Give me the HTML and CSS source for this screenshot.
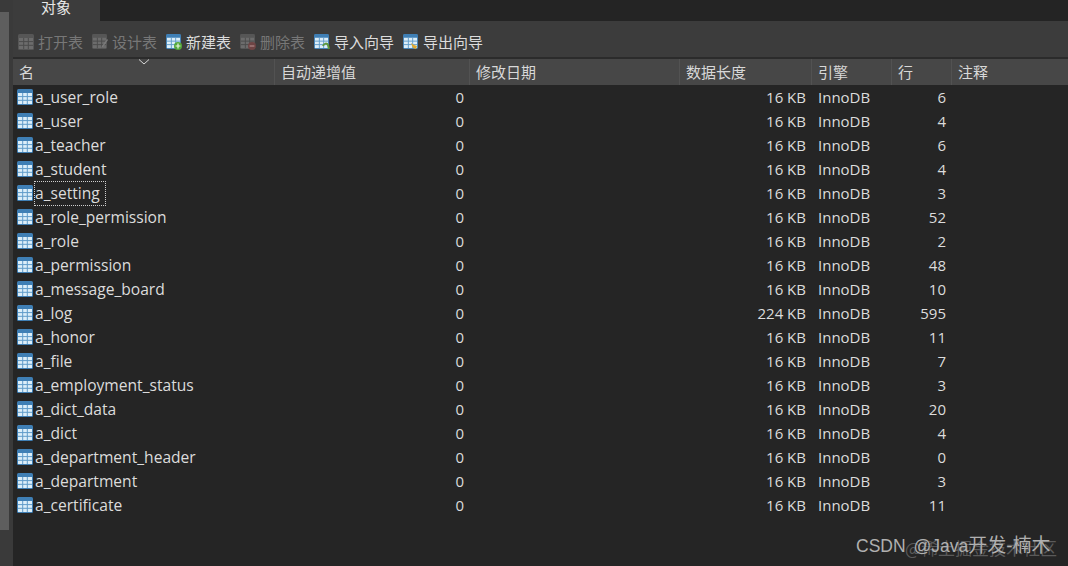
FILE: index.html
```html
<!DOCTYPE html>
<html lang="zh">
<head>
<meta charset="utf-8">
<title>对象</title>
<link rel="stylesheet" href="styles.css">
</head>
<body>
<svg class="defs" width="0" height="0" aria-hidden="true">
  <defs>
    <symbol id="tbl" viewBox="0 0 16 16">
      <rect x="0" y="0" width="16" height="16" rx="1.5" fill="#3f7fb5"/>
      <rect x="1" y="4" width="14" height="11" fill="#dceef9"/>
      <path d="M5.7 4v11M10.3 4v11M1 7.6h14M1 11.3h14" stroke="#5f9bc9" stroke-width="1" fill="none"/>
    </symbol>
    <symbol id="tblgrey" viewBox="0 0 16 16">
      <rect width="16" height="16" rx="1.5" fill="#565656"/>
      <rect x="1" y="4" width="14" height="11" fill="#6c6c6c"/>
      <path d="M5.7 4v11M10.3 4v11M1 7.6h14M1 11.3h14" stroke="#4c4c4c" stroke-width="1" fill="none"/>
    </symbol>
  </defs>
</svg>
<div class="app">
  <div class="side"><div class="side-top"></div><div class="side-mid"></div><div class="side-low"></div></div>
  <div class="main">
    <div class="tabs"><div class="tab">对象</div></div>
    <div class="toolbar">
      <span class="tool off w-open"><svg class="ticon"><use href="#tblgrey"/></svg>打开表</span>
      <span class="tool off w-design"><svg class="ticon" viewBox="0 0 16 16"><use href="#tblgrey" width="15" height="15"/><path d="M10 12l5-7 1 1-5 7-2 1z" fill="#7a7a7a"/></svg>设计表</span>
      <span class="tool w-new"><svg class="ticon" viewBox="0 0 16 16"><use href="#tbl" width="15" height="15"/><circle cx="12" cy="12" r="4" fill="#54a83a"/><path d="M12 9.6v4.8M9.6 12h4.8" stroke="#e8f6e0" stroke-width="1.2"/></svg>新建表</span>
      <span class="tool off w-del"><svg class="ticon" viewBox="0 0 16 16"><use href="#tblgrey" width="15" height="15"/><circle cx="12" cy="12" r="4" fill="#6e4444"/><path d="M9.6 12h4.8" stroke="#b08a8a" stroke-width="1.2"/></svg>删除表</span>
      <span class="tool w-imp"><svg class="ticon" viewBox="0 0 16 16"><use href="#tbl" width="15" height="15"/><path d="M9 12c1-3 4-3 5-1l1 4" stroke="#5f9a3c" stroke-width="2" fill="none"/></svg>导入向导</span>
      <span class="tool w-exp"><svg class="ticon" viewBox="0 0 16 16"><use href="#tbl" width="15" height="15"/><path d="M8 9l3 2 3 1-1 3-3-1z" fill="#e0a92e"/></svg>导出向导</span>
    </div>
    <div class="sep"></div>
    <div class="head row-grid">
      <div class="hcell">名<svg class="sort" width="12" height="6" viewBox="0 0 12 6"><path d="M1 .5l5 4.5 5-4.5" stroke="#d8d8d8" fill="none"/></svg></div>
      <div class="hcell">自动递增值</div>
      <div class="hcell">修改日期</div>
      <div class="hcell">数据长度</div>
      <div class="hcell">引擎</div>
      <div class="hcell">行</div>
      <div class="hcell last">注释</div>
    </div>
    <div class="rows">
      <div class="row row-grid"><div class="name"><svg class="ricon"><use href="#tbl"/></svg><span>a_user_role</span></div><div class="num">0</div><div></div><div class="num">16 KB</div><div class="eng">InnoDB</div><div class="num">6</div><div></div></div>
      <div class="row row-grid"><div class="name"><svg class="ricon"><use href="#tbl"/></svg><span>a_user</span></div><div class="num">0</div><div></div><div class="num">16 KB</div><div class="eng">InnoDB</div><div class="num">4</div><div></div></div>
      <div class="row row-grid"><div class="name"><svg class="ricon"><use href="#tbl"/></svg><span>a_teacher</span></div><div class="num">0</div><div></div><div class="num">16 KB</div><div class="eng">InnoDB</div><div class="num">6</div><div></div></div>
      <div class="row row-grid"><div class="name"><svg class="ricon"><use href="#tbl"/></svg><span>a_student</span></div><div class="num">0</div><div></div><div class="num">16 KB</div><div class="eng">InnoDB</div><div class="num">4</div><div></div></div>
      <div class="row row-grid"><div class="name"><svg class="ricon"><use href="#tbl"/></svg><span class="focus">a_setting</span></div><div class="num">0</div><div></div><div class="num">16 KB</div><div class="eng">InnoDB</div><div class="num">3</div><div></div></div>
      <div class="row row-grid"><div class="name"><svg class="ricon"><use href="#tbl"/></svg><span>a_role_permission</span></div><div class="num">0</div><div></div><div class="num">16 KB</div><div class="eng">InnoDB</div><div class="num">52</div><div></div></div>
      <div class="row row-grid"><div class="name"><svg class="ricon"><use href="#tbl"/></svg><span>a_role</span></div><div class="num">0</div><div></div><div class="num">16 KB</div><div class="eng">InnoDB</div><div class="num">2</div><div></div></div>
      <div class="row row-grid"><div class="name"><svg class="ricon"><use href="#tbl"/></svg><span>a_permission</span></div><div class="num">0</div><div></div><div class="num">16 KB</div><div class="eng">InnoDB</div><div class="num">48</div><div></div></div>
      <div class="row row-grid"><div class="name"><svg class="ricon"><use href="#tbl"/></svg><span>a_message_board</span></div><div class="num">0</div><div></div><div class="num">16 KB</div><div class="eng">InnoDB</div><div class="num">10</div><div></div></div>
      <div class="row row-grid"><div class="name"><svg class="ricon"><use href="#tbl"/></svg><span>a_log</span></div><div class="num">0</div><div></div><div class="num">224 KB</div><div class="eng">InnoDB</div><div class="num">595</div><div></div></div>
      <div class="row row-grid"><div class="name"><svg class="ricon"><use href="#tbl"/></svg><span>a_honor</span></div><div class="num">0</div><div></div><div class="num">16 KB</div><div class="eng">InnoDB</div><div class="num">11</div><div></div></div>
      <div class="row row-grid"><div class="name"><svg class="ricon"><use href="#tbl"/></svg><span>a_file</span></div><div class="num">0</div><div></div><div class="num">16 KB</div><div class="eng">InnoDB</div><div class="num">7</div><div></div></div>
      <div class="row row-grid"><div class="name"><svg class="ricon"><use href="#tbl"/></svg><span>a_employment_status</span></div><div class="num">0</div><div></div><div class="num">16 KB</div><div class="eng">InnoDB</div><div class="num">3</div><div></div></div>
      <div class="row row-grid"><div class="name"><svg class="ricon"><use href="#tbl"/></svg><span>a_dict_data</span></div><div class="num">0</div><div></div><div class="num">16 KB</div><div class="eng">InnoDB</div><div class="num">20</div><div></div></div>
      <div class="row row-grid"><div class="name"><svg class="ricon"><use href="#tbl"/></svg><span>a_dict</span></div><div class="num">0</div><div></div><div class="num">16 KB</div><div class="eng">InnoDB</div><div class="num">4</div><div></div></div>
      <div class="row row-grid"><div class="name"><svg class="ricon"><use href="#tbl"/></svg><span>a_department_header</span></div><div class="num">0</div><div></div><div class="num">16 KB</div><div class="eng">InnoDB</div><div class="num">0</div><div></div></div>
      <div class="row row-grid"><div class="name"><svg class="ricon"><use href="#tbl"/></svg><span>a_department</span></div><div class="num">0</div><div></div><div class="num">16 KB</div><div class="eng">InnoDB</div><div class="num">3</div><div></div></div>
      <div class="row row-grid"><div class="name"><svg class="ricon"><use href="#tbl"/></svg><span>a_certificate</span></div><div class="num">0</div><div></div><div class="num">16 KB</div><div class="eng">InnoDB</div><div class="num">11</div><div></div></div>
    </div>
  </div>
</div>
<div class="mark-faint">@稀土掘金技术社区</div>
<div class="mark">CSDN @Java<span class="mark-cjk">开发-楠木</span></div>
</body>
</html>
```
FILE: styles.css
```css
* { box-sizing: border-box; }
html, body { margin: 0; padding: 0; height: 566px; overflow: hidden; background: #252525; }
body {
  font-family: "Open Sans", "Noto Sans", "Noto Sans CJK SC", sans-serif;
  font-size: 15px;
  color: #d6d6d6;
  position: relative;
}
.defs { position: absolute; }
.app { display: flex; height: 566px; }
.side { width: 13px; flex: none; display: flex; flex-direction: column; background: #3a3a3a; }
.side-top { height: 12px; background: #3a3a3a; }
.side-mid { height: 518px; width: 9px; background: #5e5e5e; }
.side-low { flex: 1; }
.main { flex: 1; min-width: 0; display: flex; flex-direction: column; }
.tabs { height: 22px; background: #242424; border-bottom: 1px solid #3c3c3c; }
.tab {
  width: 87px; height: 22px; background: #3c3c3c; color: #e6e6e6;
  text-align: center; line-height: 15px; padding-right: 1px;
}
.toolbar { height: 35px; background: #3c3c3c; display: flex; align-items: center; padding: 5px 0 0 5px; white-space: nowrap; }
.tool { display: flex; align-items: center; gap: 4px; color: #dcdcdc; line-height: 20px; }
.tool.off { color: #777; }
.ticon { width: 16px; height: 16px; flex: none; }
.w-open { width: 74px; }
.w-design { width: 74px; }
.w-new { width: 74px; }
.w-del { width: 74px; }
.w-imp { width: 89px; }
.sep { height: 2px; background: #2b2b2b; }
.row-grid { display: grid; grid-template-columns: 262px 195px 210px 132px 80px 60px 116px; }
.head { height: 26px; background: #474747; }
.hcell {
  position: relative; border-right: 1px solid #525252; padding-left: 6px;
  line-height: 26px; color: #d8d8d8; white-space: nowrap;
}
.hcell.last { border-right: 0; }
.sort { position: absolute; left: 125px; top: 0; }
.rows { background: #252525; }
.row { height: 24px; line-height: 24px; color: #dcdcdc; }
.name { display: flex; align-items: center; padding-left: 4px; gap: 2px; white-space: nowrap; font-size: 15.6px; }
.ricon { width: 16px; height: 16px; flex: none; }
.focus { outline: 1px dotted #cfcfcf; padding-right: 5px; height: 23px; line-height: 23px; }
.num { text-align: right; padding-right: 6px; }
.eng { padding-left: 6px; }
.mark {
  position: absolute; left: 856px; top: 534px; font-family: "Liberation Sans", "Noto Sans CJK SC", sans-serif;
  font-size: 17.5px; line-height: 24px; color: #b0b0b0; white-space: nowrap; word-spacing: 3px;
}
.mark-cjk { font-size: 19px; }
.mark-faint {
  position: absolute; left: 905px; top: 538px; font-family: "Noto Sans CJK SC", sans-serif;
  font-size: 17px; line-height: 20px; color: #5a5a5a; white-space: nowrap;
}
```
